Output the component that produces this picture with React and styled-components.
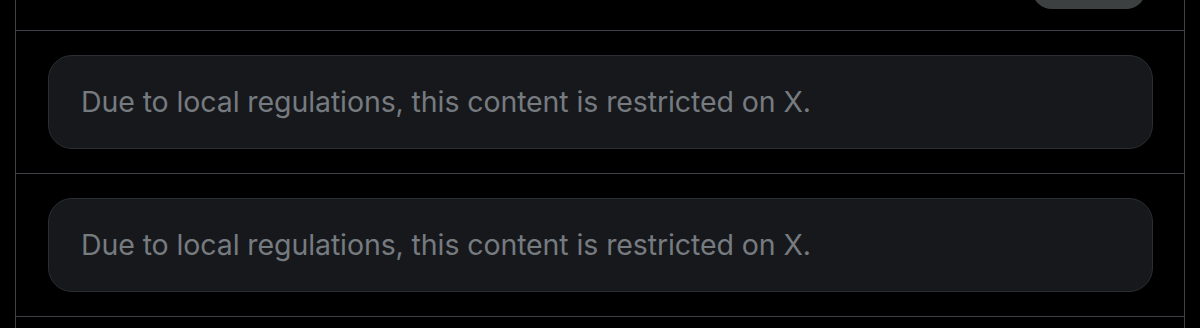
import React from 'react';
import styled, { createGlobalStyle } from 'styled-components';

const GlobalStyle = createGlobalStyle`
  html, body {
    margin: 0;
    padding: 0;
    background: #000;
  }
  body {
    font-family: Inter, "Noto Sans", "Liberation Sans", sans-serif;
    overflow: hidden;
  }
`;

const Page = styled.div`
  width: 1200px;
  height: 328px;
  background: #000;
  padding: 0 15px;
  box-sizing: border-box;
`;

const Feed = styled.div`
  border-left: 1px solid #3e4246;
  border-right: 1px solid #3e4246;
  height: 100%;
`;

const TopBar = styled.div`
  height: 30px;
  display: flex;
  justify-content: flex-end;
  padding-right: 38px;
  border-bottom: 1px solid #3e4246;
  overflow: hidden;
`;

const Pill = styled.div`
  width: 114px;
  height: 40px;
  margin-top: -31px;
  border-radius: 20px;
  background: #3d4041;
`;

const Row = styled.div`
  padding: 24px 31px 24px 32px;
  border-bottom: 1px solid #3e4246;
`;

const Notice = styled.div`
  height: 94px;
  box-sizing: border-box;
  display: flex;
  align-items: center;
  padding: 0 32px;
  background: #16181c;
  border: 1px solid #2a2d31;
  border-radius: 24px;
  color: #767b80;
  font-size: 28.5px;
  line-height: 34px;
  letter-spacing: -0.1px;
`;

const notices = [
  'Due to local regulations, this content is restricted on X.',
  'Due to local regulations, this content is restricted on X.',
];

export default function App() {
  return (
    <>
      <GlobalStyle />
      <Page>
        <Feed>
          <TopBar>
            <Pill />
          </TopBar>
          {notices.map((text, i) => (
            <Row key={i}>
              <Notice>{text}</Notice>
            </Row>
          ))}
        </Feed>
      </Page>
    </>
  );
}
